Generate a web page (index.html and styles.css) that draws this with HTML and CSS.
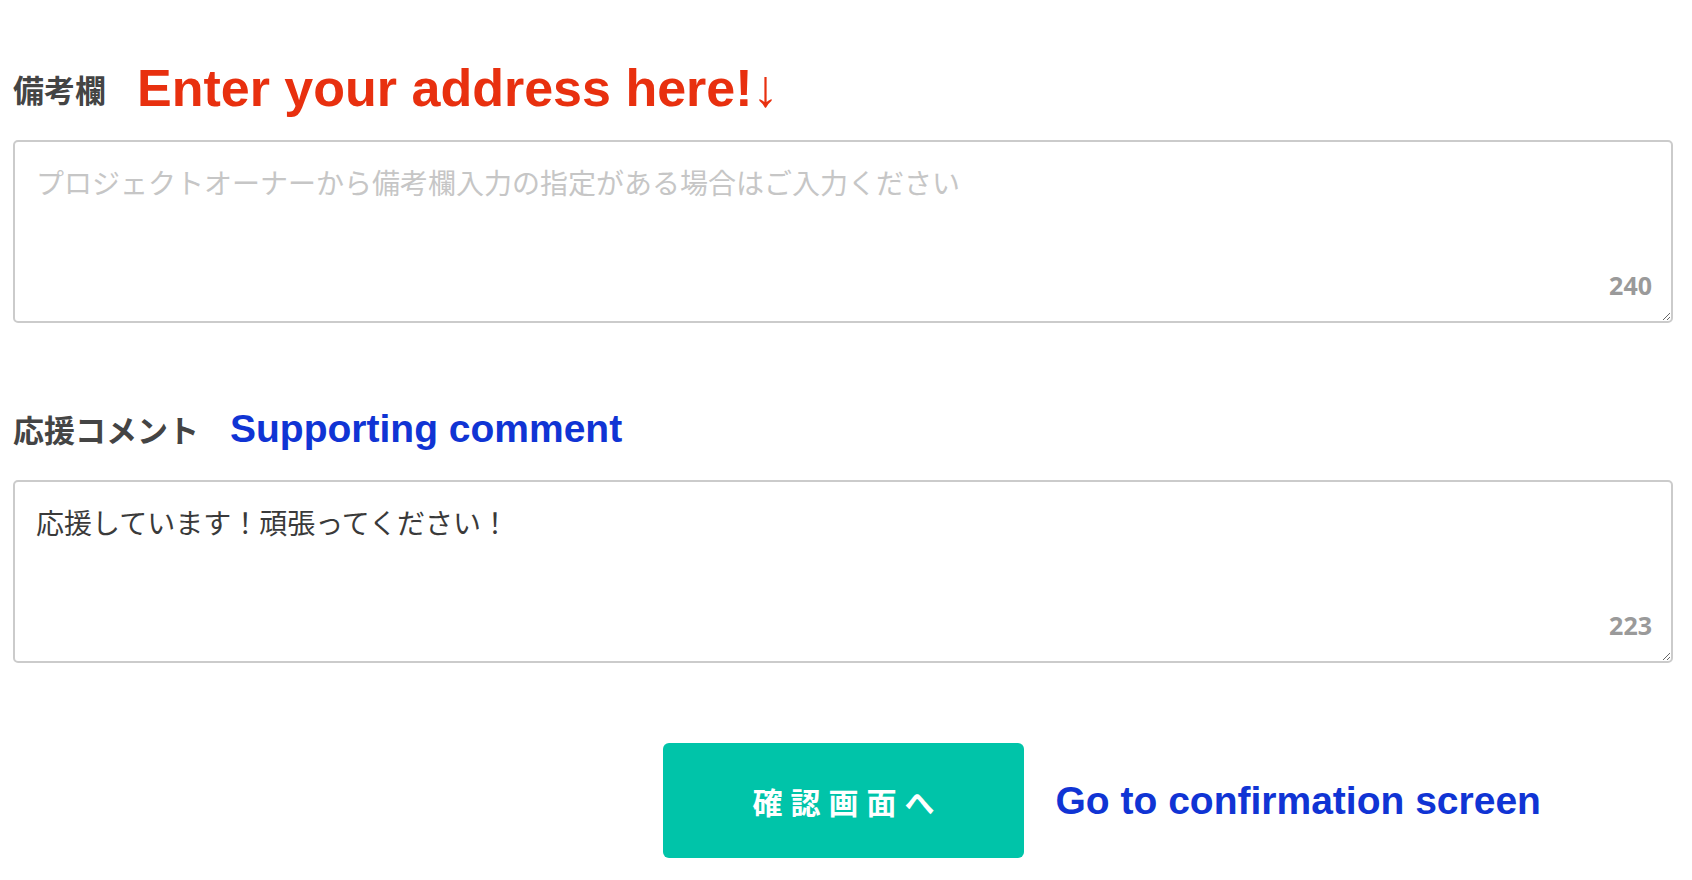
FILE: index.html
```html
<!DOCTYPE html>
<html lang="ja">
    <head>
        <meta charset="utf-8">
        <title>支援内容の入力</title>
        <link rel="stylesheet" href="styles.css">
    </head>
    <body>
        <main class="form">
            <section class="field">
                <div class="field-head">
                    <label class="field-label" for="remarks">備考欄</label>
                    <span class="note note-red">Enter your address here!↓</span>
                </div>
                <div class="textbox">
                    <textarea id="remarks" class="textbox-input" placeholder="プロジェクトオーナーから備考欄入力の指定がある場合はご入力ください"></textarea>
                    <span class="textbox-count">240</span>
                </div>
            </section>

            <section class="field field-comment">
                <div class="field-head">
                    <label class="field-label" for="comment">応援コメント</label>
                    <span class="note note-blue">Supporting comment</span>
                </div>
                <div class="textbox">
                    <textarea id="comment" class="textbox-input">応援しています！頑張ってください！</textarea>
                    <span class="textbox-count">223</span>
                </div>
            </section>

            <div class="actions">
                <button class="submit" type="button">確認画面へ</button>
                <span class="note note-blue note-action">Go to confirmation screen</span>
            </div>
        </main>
    </body>
</html>
```

FILE: styles.css
```css
body {
    margin: 0;
    background-color: #FFF;
    color: #3A3A3A;
    font-family: "Noto Sans CJK JP", sans-serif;
}
.form {
    width: 1660px;
    padding: 60px 0 0 13px;
}
.field-comment {
    margin-top: 77px;
}
.field-head {
    display: flex;
    align-items: center;
    gap: 31px;
    height: 56px;
    margin-bottom: 24px;
}
.field-label {
    color: #444;
    font-size: 31px;
    font-weight: bold;
    line-height: 1;
}
.note {
    font-family: "Liberation Sans", Arial, sans-serif;
    font-weight: bold;
    line-height: 1;
}
.note-red {
    color: #E8300F;
    font-size: 52px;
}
.note-blue {
    color: #1034D4;
    font-size: 39px;
}
.textbox {
    position: relative;
}
.textbox-input {
    display: block;
    box-sizing: border-box;
    width: 100%;
    height: 183px;
    margin: 0;
    padding: 19px 21px;
    border: 2px solid #CBCBCB;
    border-radius: 5px;
    color: #3A3A3A;
    font-family: "Noto Sans CJK JP", sans-serif;
    font-size: 28px;
    line-height: 1.5;
    resize: vertical;
}
.textbox-input::placeholder {
    color: #C6C6C6;
}
.textbox-count {
    position: absolute;
    right: 21px;
    bottom: 25px;
    color: #9A9A9A;
    font-family: "Open Sans", sans-serif;
    font-size: 25px;
    font-weight: bold;
    line-height: 1;
}
.actions {
    display: grid;
    grid-template-columns: 1fr auto 1fr;
    align-items: center;
    margin-top: 80px;
}
.submit {
    grid-column: 2;
    width: 361px;
    height: 115px;
    padding: 0 0 0 9px;
    border: none;
    border-radius: 6px;
    background-color: #00C4A9;
    color: #FFF;
    font-family: "Noto Sans CJK JP", sans-serif;
    font-size: 30px;
    font-weight: bold;
    letter-spacing: 8px;
    cursor: pointer;
}
.note-action {
    grid-column: 3;
    justify-self: start;
    padding-left: 32px;
}
```
